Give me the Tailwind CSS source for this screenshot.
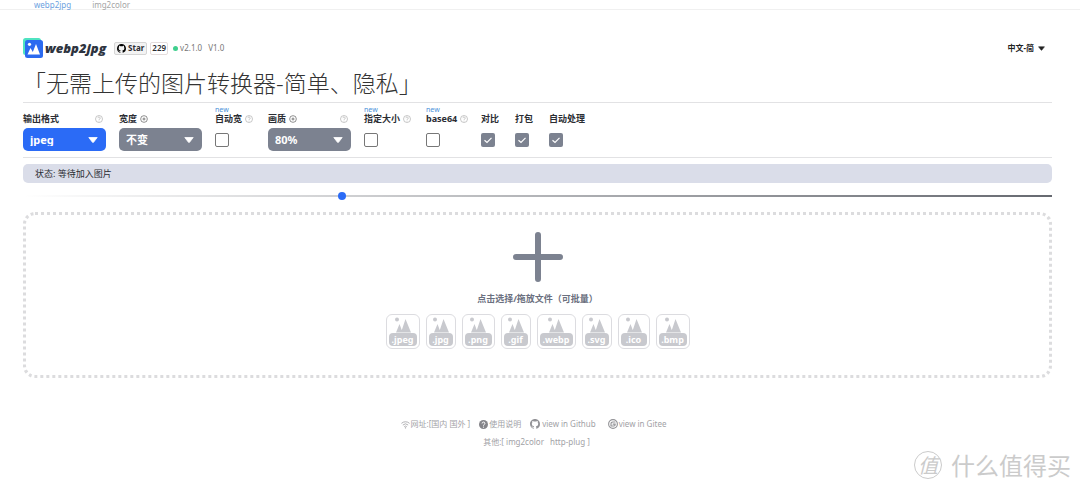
<!DOCTYPE html>
<html lang="zh-CN">
<head>
<meta charset="utf-8">
<title>webp2jpg</title>
<script src="https://cdn.jsdelivr.net/npm/@tailwindcss/browser@4"></script>
</head>
<body class="relative min-h-screen bg-white text-[9px] leading-3 text-[#2b2d33] font-['Noto_Sans','Noto_Sans_CJK_SC',sans-serif]">
<svg class="hidden">
  <symbol id="help" viewBox="0 0 16 16"><circle cx="8" cy="8" r="7" fill="none" stroke="currentColor" stroke-width="1.3"/><path d="M5.7 6.3a2.3 2.3 0 1 1 3.5 2C8.300 8.800 8 9.100 8 10" fill="none" stroke="currentColor" stroke-width="1.4"/><circle cx="8" cy="12" r=".9" fill="currentColor"/></symbol>
  <symbol id="plus" viewBox="0 0 16 16"><circle cx="8" cy="8" r="6.700" fill="none" stroke="currentColor" stroke-width="1.3"/><path d="M8 5v6M5 8h6" stroke="currentColor" stroke-width="1.400"/></symbol>
  <symbol id="caret" viewBox="0 0 10 6"><path d="M.8.5h8.400L5.500 5.300a.7.7 0 0 1-1 0z" fill="currentColor" stroke="currentColor" stroke-width=".8" stroke-linejoin="round"/></symbol>
  <symbol id="github" viewBox="0 0 16 16"><path fill="currentColor" d="M8 0C3.580 0 0 3.580 0 8c0 3.540 2.290 6.530 5.470 7.590.4.070.55-.17.55-.38v-1.490c-2.010.37-2.530-.49-2.690-.94-.09-.23-.48-.94-.82-1.130-.28-.15-.68-.52-.01-.53.63-.01 1.080.58 1.230.82.72 1.210 1.870.87 2.330.66.070-.52.280-.87.510-1.070-1.780-.2-3.640-.89-3.640-3.950 0-.87.310-1.590.82-2.150-.08-.2-.36-1.020.08-2.120 0 0 .67-.21 2.200.82a7.600 7.600 0 0 1 4 0c1.530-1.040 2.200-.82 2.200-.82.440 1.100.160 1.920.080 2.120.510.560.82 1.270.82 2.150 0 3.070-1.870 3.750-3.650 3.950.290.250.540.730.540 1.480v2.200c0 .21.150.46.550.38A8.010 8.010 0 0 0 16 8c0-4.420-3.580-8-8-8z"/></symbol>
  <symbol id="picture" viewBox="0 0 22 16"><circle cx="5" cy="2.500" r="2" fill="currentColor"/><path d="M4 15.500 7.500 7l3.200 8.500zM9 15.500 13.500 2l5.500 13.500z" fill="currentColor"/></symbol>
</svg>

<nav class="flex h-[10px] gap-[21px] border-b border-[#f0f0f0] pl-[34px] text-[8px] leading-[9px]">
  <a href="#" class="text-[#6c9fe0]">webp2jpg</a>
  <a href="#" class="text-[#a5a5a5]">img2color</a>
</nav>

<main class="ml-[23px] mr-7">
  <header class="flex items-center pt-7">
    <a href="#" class="flex items-center gap-[2px]">
      <svg class="size-5" viewBox="0 0 20 20"><rect width="18" height="17" rx="2.500" fill="#4fe3c1"/><rect x="2" y="2" width="18" height="18" rx="2.500" fill="#2b6af0"/><circle cx="6.500" cy="6.300" r="1.600" fill="#fff"/><path d="M4.500 16.500 7.500 10l2.300 4L13 6l4 10.500z" fill="#fff"/></svg>
      <span class="text-[13px] leading-5 font-extrabold italic text-[#2e3440] font-['Open_Sans','Noto_Sans',sans-serif]">webp2jpg</span>
    </a>
    <a href="#" class="ml-2 flex h-[13px] items-center gap-[2px] rounded-xs border border-[#d5d5d5] bg-[#f3f3f3] px-[2px] text-[8px] font-bold"><svg class="size-[9px] text-black"><use href="#github"/></svg>Star</a>
    <a href="#" class="ml-[3px] flex h-[13px] items-center rounded-xs border border-[#e4dcdc] px-px text-[8px] font-semibold">229</a>
    <span class="ml-[5px] size-[5px] rounded-full bg-[#3fcf8e]"></span>
    <a href="#" class="ml-[2px] text-[8px] text-[#777]">v2.1.0</a>
    <a href="#" class="ml-[6px] text-[8px] text-[#777]">V1.0</a>
    <button class="mr-[7px] ml-auto flex items-center gap-1 text-[8px] font-bold text-[#222]">中文-简<svg class="h-[5px] w-[7px]"><use href="#caret"/></svg></button>
  </header>

  <h1 class="mt-2 h-9 text-[23px] leading-[32px] font-light text-[#333] font-['Noto_Sans_CJK_SC',sans-serif]">「无需上传的图片转换器-简单、隐私」</h1>

  <form class="flex h-14 gap-[13px] border-y border-[#e2e2e4] pt-[10px] font-bold">
    <div class="w-[83px]">
      <div class="flex items-center justify-between"><label for="format">输出格式</label><svg class="mr-[3px] size-2 text-[#aaa]"><use href="#help"/></svg></div>
      <div class="relative mt-[3px]"><select id="format" class="h-[23px] w-full appearance-none rounded-[5px] bg-[#2b6bf6] pl-[7px] text-[11px] font-bold text-white"><option>jpeg</option></select><svg class="pointer-events-none absolute top-[9px] right-2 h-[6px] w-[10px] text-white"><use href="#caret"/></svg></div>
    </div>
    <div class="w-[83px]">
      <div class="flex items-center gap-[3px]"><label for="width">宽度</label><svg class="size-2 text-[#555]"><use href="#plus"/></svg></div>
      <div class="relative mt-[3px]"><select id="width" class="h-[23px] w-full appearance-none rounded-[5px] bg-[#7c8290] pl-[7px] text-[11px] font-bold text-white"><option>不变</option></select><svg class="pointer-events-none absolute top-[9px] right-2 h-[6px] w-[10px] text-white"><use href="#caret"/></svg></div>
    </div>
    <div class="relative w-10">
      <span class="absolute -top-[9px] text-[7px] font-normal text-[#4a90d9]">new</span>
      <div class="flex items-center gap-[3px] whitespace-nowrap"><label for="autowidth">自动宽</label><svg class="size-2 shrink-0 text-[#aaa]"><use href="#help"/></svg></div>
      <input id="autowidth" type="checkbox" class="mt-2 block size-[14px] appearance-none rounded-xs border border-[#777] bg-white">
    </div>
    <div class="w-[83px]">
      <div class="flex items-center gap-[3px]"><label for="quality">画质</label><svg class="size-2 text-[#555]"><use href="#plus"/></svg><svg class="mr-[3px] ml-auto size-2 text-[#aaa]"><use href="#help"/></svg></div>
      <div class="relative mt-[3px]"><select id="quality" class="h-[23px] w-full appearance-none rounded-[5px] bg-[#7c8290] pl-[7px] text-[11px] font-bold text-white"><option>80%</option></select><svg class="pointer-events-none absolute top-[9px] right-2 h-[6px] w-[10px] text-white"><use href="#caret"/></svg></div>
    </div>
    <div class="relative w-[49px]">
      <span class="absolute -top-[9px] text-[7px] font-normal text-[#4a90d9]">new</span>
      <div class="flex items-center gap-[3px] whitespace-nowrap"><label for="size">指定大小</label><svg class="size-2 shrink-0 text-[#aaa]"><use href="#help"/></svg></div>
      <input id="size" type="checkbox" class="mt-2 block size-[14px] appearance-none rounded-xs border border-[#777] bg-white">
    </div>
    <div class="relative w-[42px]">
      <span class="absolute -top-[9px] text-[7px] font-normal text-[#4a90d9]">new</span>
      <div class="flex items-center gap-[3px] whitespace-nowrap"><label for="base64">base64</label><svg class="size-2 shrink-0 text-[#aaa]"><use href="#help"/></svg></div>
      <input id="base64" type="checkbox" class="mt-2 block size-[14px] appearance-none rounded-xs border border-[#777] bg-white">
    </div>
    <div class="w-[21px]">
      <label for="compare" class="block">对比</label>
      <div class="relative mt-2 size-[14px]"><input id="compare" type="checkbox" checked class="block size-[14px] appearance-none rounded-xs bg-[#7c8290]"><svg viewBox="0 0 14 14" class="pointer-events-none absolute inset-0 size-[14px]"><path d="m3.500 7.200 2.500 2.300 4.500-4.700" fill="none" stroke="#fff" stroke-width="1.200"/></svg></div>
    </div>
    <div class="w-[21px]">
      <label for="zip" class="block">打包</label>
      <div class="relative mt-2 size-[14px]"><input id="zip" type="checkbox" checked class="block size-[14px] appearance-none rounded-xs bg-[#7c8290]"><svg viewBox="0 0 14 14" class="pointer-events-none absolute inset-0 size-[14px]"><path d="m3.500 7.200 2.500 2.300 4.500-4.700" fill="none" stroke="#fff" stroke-width="1.200"/></svg></div>
    </div>
    <div>
      <label for="auto" class="block">自动处理</label>
      <div class="relative mt-2 size-[14px]"><input id="auto" type="checkbox" checked class="block size-[14px] appearance-none rounded-xs bg-[#7c8290]"><svg viewBox="0 0 14 14" class="pointer-events-none absolute inset-0 size-[14px]"><path d="m3.500 7.200 2.500 2.300 4.500-4.700" fill="none" stroke="#fff" stroke-width="1.200"/></svg></div>
    </div>
  </form>

  <p class="mt-[6px] h-[19px] rounded-[5px] bg-[#dadde9] pl-3 leading-[19px]">状态: 等待加入图片</p>
  <input type="range" min="0" max="1000" value="309" aria-label="对比" class="mt-[9px] block h-2 w-full appearance-none bg-linear-to-r from-transparent to-[#666970] bg-[length:100%_2px] bg-center bg-no-repeat [&::-webkit-slider-thumb]:size-2 [&::-webkit-slider-thumb]:appearance-none [&::-webkit-slider-thumb]:rounded-full [&::-webkit-slider-thumb]:bg-[#2b6bf6]">

  <section class="mt-3 flex h-[166px] flex-col items-center rounded-xl border-3 border-dotted border-[#dcdcde] pt-[17px]">
    <button class="flex flex-col items-center font-bold text-[#6b7080]">
      <svg class="size-[50px]" viewBox="0 0 50 50"><path d="M25 3v44M3 25h44" stroke="#7c8290" stroke-width="6" stroke-linecap="round"/></svg>
      <span class="mt-[11px]">点击选择/拖放文件（可批量）</span>
    </button>
    <ul class="mt-[9px] flex gap-[6px] text-center text-[9px] leading-[13px] font-bold text-white">
      <li class="flex h-[35px] w-[34px] flex-col items-center rounded-md border border-[#dcdce0] px-[2px] pt-[2px]"><svg class="h-4 w-[22px] text-[#c8c9ce]"><use href="#picture"/></svg><span class="w-full rounded-[4px] bg-[#c8c9ce]">.jpeg</span></li>
      <li class="flex h-[35px] w-[30px] flex-col items-center rounded-md border border-[#dcdce0] px-[2px] pt-[2px]"><svg class="h-4 w-[22px] text-[#c8c9ce]"><use href="#picture"/></svg><span class="w-full rounded-[4px] bg-[#c8c9ce]">.jpg</span></li>
      <li class="flex h-[35px] w-[33px] flex-col items-center rounded-md border border-[#dcdce0] px-[2px] pt-[2px]"><svg class="h-4 w-[22px] text-[#c8c9ce]"><use href="#picture"/></svg><span class="w-full rounded-[4px] bg-[#c8c9ce]">.png</span></li>
      <li class="flex h-[35px] w-[30px] flex-col items-center rounded-md border border-[#dcdce0] px-[2px] pt-[2px]"><svg class="h-4 w-[22px] text-[#c8c9ce]"><use href="#picture"/></svg><span class="w-full rounded-[4px] bg-[#c8c9ce]">.gif</span></li>
      <li class="flex h-[35px] w-[39px] flex-col items-center rounded-md border border-[#dcdce0] px-[2px] pt-[2px]"><svg class="h-4 w-[22px] text-[#c8c9ce]"><use href="#picture"/></svg><span class="w-full rounded-[4px] bg-[#c8c9ce]">.webp</span></li>
      <li class="flex h-[35px] w-[30px] flex-col items-center rounded-md border border-[#dcdce0] px-[2px] pt-[2px]"><svg class="h-4 w-[22px] text-[#c8c9ce]"><use href="#picture"/></svg><span class="w-full rounded-[4px] bg-[#c8c9ce]">.svg</span></li>
      <li class="flex h-[35px] w-8 flex-col items-center rounded-md border border-[#dcdce0] px-[2px] pt-[2px]"><svg class="h-4 w-[22px] text-[#c8c9ce]"><use href="#picture"/></svg><span class="w-full rounded-[4px] bg-[#c8c9ce]">.ico</span></li>
      <li class="flex h-[35px] w-[34px] flex-col items-center rounded-md border border-[#dcdce0] px-[2px] pt-[2px]"><svg class="h-4 w-[22px] text-[#c8c9ce]"><use href="#picture"/></svg><span class="w-full rounded-[4px] bg-[#c8c9ce]">.bmp</span></li>
    </ul>
  </section>

  <footer class="mt-10 mr-2 flex flex-col items-center gap-[6px] text-[8px] text-[#a2a2a6]">
    <div class="flex items-center gap-[9px]">
      <span class="flex items-center"><svg class="mr-px size-[9px]" viewBox="0 0 16 16" fill="none" stroke="currentColor" stroke-width="1.500"><path d="M.8 6a10.500 10.500 0 0 1 14.400 0M3.300 9a6.800 6.800 0 0 1 9.400 0M5.800 11.700a3.300 3.300 0 0 1 4.400 0"/><circle cx="8" cy="14" r=".6"/></svg>网址:[<a href="#">国内</a>&nbsp;<a href="#">国外</a>&nbsp;]</span>
      <a href="#" class="flex items-center"><svg class="mr-px size-[9px]" viewBox="0 0 16 16"><circle cx="8" cy="8" r="8" fill="#85858a"/><path d="M5.500 6.200a2.500 2.500 0 1 1 3.700 2.100C8.300 8.800 8 9.200 8 10.200" fill="none" stroke="#fff" stroke-width="1.700"/><circle cx="8" cy="12.500" r="1.100" fill="#fff"/></svg>使用说明</a>
      <a href="#" class="flex items-center gap-[2px]"><svg class="size-[10px] text-[#929296]"><use href="#github"/></svg>view in Github</a>
      <a href="#" class="ml-[3px] flex items-center gap-px"><svg class="size-[10px]" viewBox="0 0 16 16" fill="none" stroke="#929296" stroke-width="1.800"><circle cx="8" cy="8" r="7"/><path d="M12 4.800H7.500A2.700 2.700 0 0 0 4.800 7.500v3.700h4.700a1.900 1.900 0 0 0 1.900-1.900V8.200H7.500"/></svg>view in Gitee</a>
    </div>
    <div class="mr-[-6px] flex gap-[6px]"><span>其他:[ <a href="#">img2color</a></span><span><a href="#">http-plug</a> ]</span></div>
  </footer>
</main>

<div class="absolute right-[9px] bottom-[9px] flex items-center gap-[9px] text-[#cbcbcb] font-['Noto_Sans_CJK_SC',sans-serif]">
  <span class="flex size-7 items-center justify-center rounded-full border border-[#cbcbcb] text-xl leading-none italic">值</span>
  <span class="text-2xl leading-8">什么值得买</span>
</div>
</body>
</html>
